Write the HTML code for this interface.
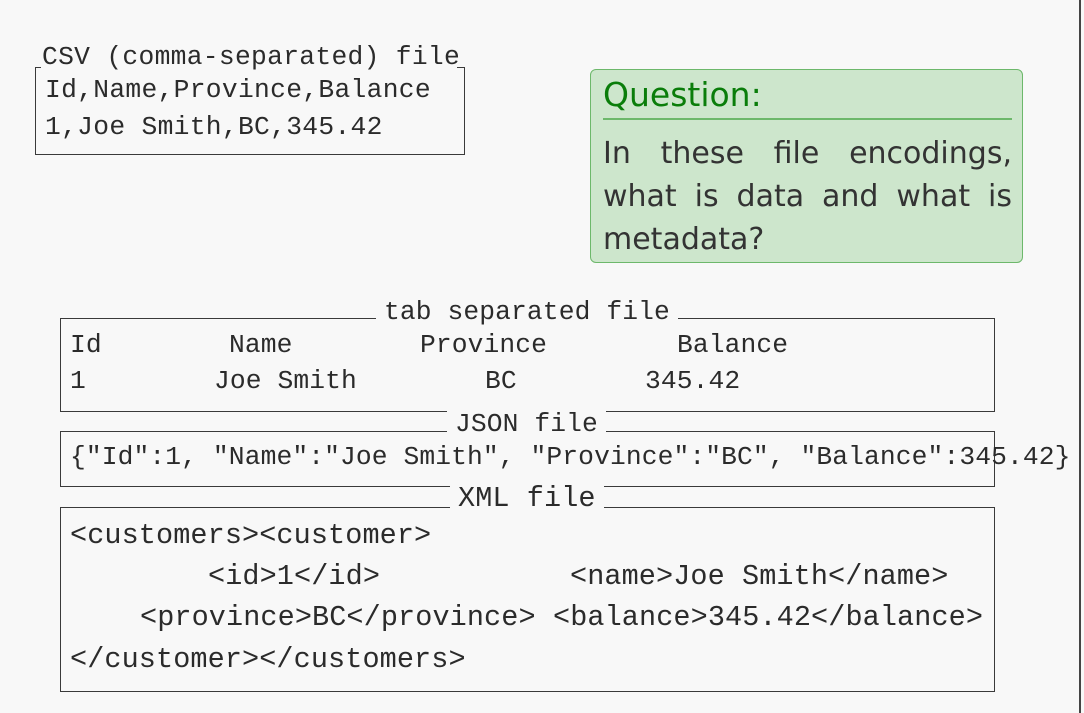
<!DOCTYPE html>
<html><head><meta charset="utf-8"><style>
body{margin:0;width:1084px;height:713px;background:#f8f8f8;position:relative;overflow:hidden}
.m{position:absolute;font-family:"Liberation Mono",monospace;font-size:26.3px;line-height:30px;color:#2b2b2b;white-space:pre;letter-spacing:0.1px}
.x{font-size:28.5px;line-height:32px}
.b{position:absolute;border:1px solid #3a3a3a}
.t{position:absolute;background:#f8f8f8;padding:0 8px}
.q{position:absolute;left:590px;top:69px;width:431px;height:192px;background:#cde6cc;border:1.5px solid #6db86b;border-radius:6px}
.s{font-family:"DejaVu Sans","Liberation Sans",sans-serif}
</style></head><body>
<div style="position:absolute;right:3px;top:0;width:2px;height:713px;background:#444"></div>

<div class="b" style="left:35px;top:67px;width:428px;height:87px;border-top:none"></div>
<div style="position:absolute;left:35px;top:67px;width:6px;height:1px;background:#3a3a3a"></div>
<div style="position:absolute;left:457px;top:67px;width:7px;height:1px;background:#3a3a3a"></div>
<div class="m" style="left:42px;top:42px;letter-spacing:0.3px">CSV (comma-separated) file</div>
<div class="m" style="left:45px;top:75px;letter-spacing:0.3px">Id,Name,Province,Balance</div>
<div class="m" style="left:45px;top:112px;letter-spacing:0.3px">1,Joe Smith,BC,345.42</div>

<div class="q">
<div class="s" style="position:absolute;left:12px;top:5px;font-size:33px;color:#0a7d0a">Question:</div>
<div style="position:absolute;left:12px;right:10px;top:48px;height:2px;background:#6db86b"></div>
<div class="s" style="position:absolute;left:12px;right:10px;top:62px;font-size:30px;line-height:43px;color:#333;text-align:justify;text-align-last:left">In these file encodings, what is data and what is metadata?</div>
</div>

<div class="b" style="left:60px;top:318px;width:933px;height:92px"></div>
<div class="m t" style="left:376px;top:297px">tab separated file</div>
<div class="m" style="left:70px;top:330px">Id</div>
<div class="m" style="left:229px;top:330px">Name</div>
<div class="m" style="left:420px;top:330px">Province</div>
<div class="m" style="left:677px;top:330px">Balance</div>
<div class="m" style="left:70px;top:366px">1</div>
<div class="m" style="left:214px;top:366px">Joe Smith</div>
<div class="m" style="left:485px;top:366px">BC</div>
<div class="m" style="left:645px;top:366px">345.42</div>

<div class="b" style="left:60px;top:431px;width:933px;height:54px"></div>
<div class="m t" style="left:447px;top:409px">JSON file</div>
<div class="m" style="left:70px;top:442px">{"Id":1, "Name":"Joe Smith", "Province":"BC", "Balance":345.42}</div>

<div class="b" style="left:60px;top:507px;width:933px;height:183px"></div>
<div class="m x t" style="left:450px;top:483px">XML file</div>
<div class="m x" style="left:70px;top:520px">&lt;customers&gt;&lt;customer&gt;</div>
<div class="m x" style="left:208px;top:561px">&lt;id&gt;1&lt;/id&gt;</div>
<div class="m x" style="left:570px;top:561px">&lt;name&gt;Joe Smith&lt;/name&gt;</div>
<div class="m x" style="left:140px;top:602px">&lt;province&gt;BC&lt;/province&gt;</div>
<div class="m x" style="left:553px;top:602px">&lt;balance&gt;345.42&lt;/balance&gt;</div>
<div class="m x" style="left:70px;top:644px">&lt;/customer&gt;&lt;/customers&gt;</div>
</body></html>
